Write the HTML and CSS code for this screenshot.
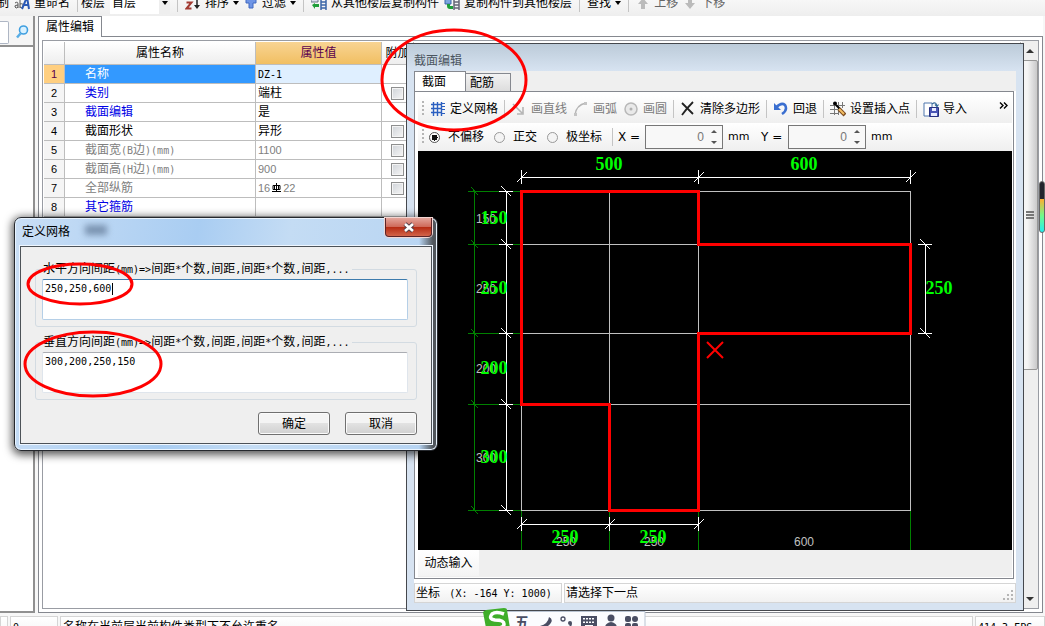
FILE: index.html
```html
<!DOCTYPE html>
<html lang="zh-CN">
<head>
<meta charset="utf-8">
<title>属性编辑</title>
<link rel="stylesheet" href="styles.css">
</head>
<body>
<div class="shell">
  <div class="main-toolbar">
    <button class="tool first">制</button>
    <button class="tool">
      <svg width="16" height="16" viewBox="0 0 16 16"><path d="M1 8q3-2 3 1v4M4 10q-4 0-3 2 1 2 3 0M6 4v9M6 9q4-1 3 2-1 3-3 1" fill="none" stroke="#555"/><path d="M8 14 13 2l2 12M10 10h4" fill="none" stroke="#2b59b5" stroke-width="2"/></svg>
      <span>重命名</span>
    </button>
    <span class="sep"></span>
    <label class="tool-label" for="floor">楼层</label>
    <span class="floor"><select id="floor"><option>首层</option></select><i class="caret"></i></span>
    <span class="sep"></span>
    <button class="tool">
      <svg width="16" height="16" viewBox="0 0 16 16"><path d="M1.500 7.500h5l-5 6h5" fill="none" stroke="#a33b32" stroke-width="2"/><path d="M12 2v9" stroke="#222" stroke-width="1.500"/><path d="M9 10h6l-3 4z" fill="#222"/></svg>
      <span>排序</span><i class="caret"></i>
    </button>
    <button class="tool">
      <svg width="14" height="16" viewBox="0 0 14 16"><path d="M2 3h10v5H9v5H5V8H2z" fill="#6f95e6" stroke="#4068c0"/></svg>
      <span>过滤</span><i class="caret"></i>
    </button>
    <span class="sep"></span>
    <button class="tool">
      <svg width="16" height="16" viewBox="0 0 16 16"><path d="M0 2h7v5H0z" fill="#dde" stroke="#678"/><path d="M10 1v14M15 1v14M10 4h5M10 7h5M10 10h5M10 13h5" stroke="#3b67a8" stroke-width="1.500"/><path d="M1 10l3-2v1h4v3H4v2z" fill="#1f9e3a"/></svg>
      <span>从其他楼层复制构件</span>
    </button>
    <button class="tool">
      <svg width="16" height="16" viewBox="0 0 16 16"><path d="M1 4h6v5H1z" fill="#7ca6df" stroke="#3b67a8"/><path d="M10 1v14M15 1v14M10 4h5M10 7h5M10 10h5M10 13h5" stroke="#667" stroke-width="1.500"/><path d="M3 9h3v2h3v3H6q-3 0-3-3z" fill="#1f9e3a"/></svg>
      <span>复制构件到其他楼层</span>
    </button>
    <span class="sep"></span>
    <button class="tool"><span>查找</span><i class="caret"></i></button>
    <span class="sep"></span>
    <button class="tool" disabled>
      <svg width="14" height="16" viewBox="0 0 14 16"><path d="M7 3l5 6H9v5H5V9H2z" fill="#bbb"/></svg>
      <span>上移</span>
    </button>
    <button class="tool" disabled>
      <svg width="14" height="16" viewBox="0 0 14 16"><path d="M7 14l5-6H9V3H5v5H2z" fill="#bbb"/></svg>
      <span>下移</span>
    </button>
  </div>

  <div class="workspace">
    <aside class="side">
      <div class="search">
        <input class="search-box" type="text" aria-label="搜索">
        <button class="search-go" aria-label="搜索">
          <svg width="14" height="14" viewBox="0 0 14 14"><circle cx="8.500" cy="5" r="4" fill="#d9f1ff" stroke="#3f9fe0" stroke-width="1.600"/><path d="M5.500 8.500 2 12.500" stroke="#59aee6" stroke-width="2.500"/></svg>
        </button>
      </div>
      <div class="side-list"></div>
    </aside>

    <section class="props">
      <div class="props-tabs"><button class="props-tab">属性编辑</button><span class="tab-line"></span></div>
      <div class="props-page">
        <div class="props-frame">
          <div class="table-area">
            <table class="prop-table">
              <colgroup><col class="c-num"><col class="c-name"><col class="c-value"><col class="c-add"><col></colgroup>
              <thead><tr><th></th><th>属性名称</th><th class="hot">属性值</th><th>附加</th><th></th></tr></thead>
              <tbody>
                <tr class="selected"><th>1</th><td>名称</td><td><span class="mono">DZ-1</span></td><td></td><td></td></tr>
                <tr class="link"><th>2</th><td>类别</td><td>端柱</td><td><input type="checkbox" aria-label="类别附加"></td><td></td></tr>
                <tr class="link"><th>3</th><td>截面编辑</td><td>是</td><td></td><td></td></tr>
                <tr><th>4</th><td>截面形状</td><td>异形</td><td><input type="checkbox" aria-label="截面形状附加"></td><td></td></tr>
                <tr class="muted"><th>5</th><td>截面宽<span class="mono">(B</span>边<span class="mono">)(mm)</span></td><td><span class="num">1100</span></td><td><input type="checkbox" aria-label="截面宽附加"></td><td></td></tr>
                <tr class="muted"><th>6</th><td>截面高<span class="mono">(H</span>边<span class="mono">)(mm)</span></td><td><span class="num">900</span></td><td><input type="checkbox" aria-label="截面高附加"></td><td></td></tr>
                <tr class="muted"><th>7</th><td>全部纵筋</td><td><span class="num">16</span><svg class="rebar" width="13" height="10" viewBox="0 0 13 10"><path d="M6.500 0v9M2 8.500h9M4.500 2.500v4M8.500 2.500v4M3 2.500h7v4H3z" fill="none" stroke="#000"/></svg><span class="num">22</span></td><td><input type="checkbox" aria-label="全部纵筋附加"></td><td></td></tr>
                <tr class="link"><th>8</th><td>其它箍筋</td><td></td><td></td><td></td></tr>
              </tbody>
            </table>
          </div>
          <div class="scrollbar">
            <button class="arrow up" aria-label="向上"></button>
            <div class="thumb"><i></i><i></i><i></i></div>
            <div class="track"></div>
            <button class="arrow down" aria-label="向下"></button>
          </div>
        </div>
      </div>
    </section>
  </div>

  <footer class="status">
    <span class="cell edge"></span>
    <span class="cell zero"><span class="mono">0</span></span>
    <span class="cell grow">名称在当前层当前构件类型下不允许重名</span>
    <span class="cell fps"><span class="mono">414.3 FPS</span></span>
  </footer>
</div>

<section class="editor">
  <h1 class="editor-title">截面编辑</h1>
  <div class="editor-body">
    <div class="editor-tabs"><button class="etab active">截面</button><button class="etab">配筋</button></div>
    <div class="editor-page">
      <div class="bar">
        <span class="grip"></span>
        <button class="btn"><svg width="16" height="16" viewBox="0 0 16 16"><path d="M3.500 1v14M7.500 1v14M11.500 1v14M1 3.500h10M1 7.500h10M1 11.500h10" stroke="#2b5fc0" stroke-width="1.400"/><path d="M12 2.500h3M12 5.500h3M12 8.500h3M12 12.500h3" stroke="#2b5fc0"/></svg><span>定义网格</span></button>
        <span class="sep"></span>
        <button class="btn" disabled><svg width="16" height="16" viewBox="0 0 16 16"><path d="M2 3l9 9M12 6v7H6" fill="none" stroke="#b5b5b5" stroke-width="1.600"/></svg><span>画直线</span></button>
        <button class="btn" disabled><svg width="16" height="16" viewBox="0 0 16 16"><path d="M2 14Q3 4 13 2" fill="none" stroke="#b5b5b5" stroke-width="1.500"/><path d="M1 12h3v3H1zM11 1h3v3h-3z" fill="#c4c4c4"/></svg><span>画弧</span></button>
        <button class="btn" disabled><svg width="16" height="16" viewBox="0 0 16 16"><circle cx="8" cy="8" r="6" fill="#e9e9e9" stroke="#b8b8b8" stroke-width="1.500"/><circle cx="8" cy="8" r="1.500" fill="#b0b0b0"/></svg><span>画圆</span></button>
        <span class="sep"></span>
        <button class="btn"><svg width="16" height="16" viewBox="0 0 16 16"><path d="M2 2q5 5 11 11M13 1Q7 7 2 14" fill="none" stroke="#222" stroke-width="1.800"/></svg><span>清除多边形</span></button>
        <span class="sep"></span>
        <button class="btn"><svg width="16" height="16" viewBox="0 0 16 16"><path d="M3.500 6q5-5 8.500-2 3 5-3 9" fill="none" stroke="#3b6fd0" stroke-width="2.500"/><path d="M1 2v7h7z" fill="#3b6fd0"/></svg><span>回退</span></button>
        <span class="sep"></span>
        <button class="btn"><svg width="16" height="16" viewBox="0 0 16 16"><path d="M4.500 1v13M8.500 1v13M12.500 1v6M0 4.500h15M0 8.500h9M0 12.500h9" stroke="#777"/><circle cx="5" cy="2.500" r="2" fill="#000"/><path d="M6 4l4 4" stroke="#000" stroke-width="2"/><path d="M9 8l6 6" stroke="#7b4b20" stroke-width="4"/><path d="M9 8l5 5" stroke="#f4bf62" stroke-width="2"/></svg><span>设置插入点</span></button>
        <span class="sep"></span>
        <button class="btn"><svg width="16" height="16" viewBox="0 0 16 16"><path d="M1 2h8v13H1z" fill="#fff" stroke="#4f76ad"/><path d="M6.500 6.500h9v9h-9z" fill="#4a55b5" stroke="#263080"/><path d="M9 7h4v3H9zM8 12h6v3H8z" fill="#e8ecff"/><path d="M9 3q4-3 5 2M12 3.500l2 2 1.500-2" fill="none" stroke="#356a9a" stroke-width="1.200"/></svg><span>导入</span></button>
        <button class="more" aria-label="更多"><svg width="9" height="7" viewBox="0 0 9 7"><path d="M1 .5l3 3-3 3M5 .5l3 3-3 3" fill="none" stroke="#000" stroke-width="1.400"/></svg></button>
      </div>
      <div class="bar options">
        <span class="grip"></span>
        <label class="radio"><input type="radio" name="offset" checked>不偏移</label>
        <label class="radio"><input type="radio" name="offset">正交</label>
        <label class="radio"><input type="radio" name="offset">极坐标</label>
        <span class="sep"></span>
        <label class="axis" for="dx">X =</label>
        <span class="spin"><input id="dx" type="text" value="0"><span class="steps"><i class="inc"></i><i class="dec"></i></span></span>
        <span class="axis unit">mm</span>
        <label class="axis" for="dy">Y =</label>
        <span class="spin"><input id="dy" type="text" value="0"><span class="steps"><i class="inc"></i><i class="dec"></i></span></span>
        <span class="axis unit">mm</span>
      </div>
      <div class="canvas">
        <svg class="drawing" viewBox="418 151 594 399" preserveAspectRatio="xMinYMin slice">
          <g class="ext">
            <path d="M474.500 191v320M468 191.500h53M468 244.500h53M468 333.500h53M468 404.500h53M468 510.500h53M521.500 511v39M609.500 511v39M698.500 511v39M910.500 511v39"/>
            <path class="tick" d="M471 187l7 8M471 240l7 8M471 329l7 8M471 400l7 8M471 506l7 8"/>
          </g>
          <path class="grid" d="M521.500 191v320M609.500 191v320M698.500 191v320M910.500 191v320M521 191.500h390M521 244.500h390M521 333.500h390M521 404.500h390M521 510.500h390"/>
          <g class="small">
            <text x="486" y="223">150</text><text x="486" y="293">250</text><text x="486" y="373">200</text><text x="486" y="462">300</text>
            <text x="566" y="546">250</text><text x="654" y="546">250</text><text x="804" y="546">600</text>
          </g>
          <g class="dim">
            <path d="M506.500 191v320M499 191.500h14M499 244.500h14M499 333.500h14M499 404.500h14M499 510.500h14"/>
            <path d="M521 177.500h390M521.500 170v14M698.500 170v14M910.500 170v14"/>
            <path d="M521 524.500h178M521.500 517v14M609.500 517v14M698.500 517v14"/>
            <path d="M925.500 244v90M918 244.500h14M918 333.500h14"/>
            <path class="tick" d="M501 186l10 10M501 239l10 10M501 328l10 10M501 399l10 10M501 505l10 10M517 182l10-10M694 182l10-10M906 182l10-10M517 529l10-10M605 529l10-10M694 529l10-10M920 239l10 10M920 328l10 10"/>
          </g>
          <path class="outline" d="M521.500 191.500h177v53h212v89h-212v177h-89v-106h-88z"/>
          <path class="origin" d="M707 342l16 16M723 342l-16 16"/>
          <g class="big">
            <text x="609" y="170">500</text><text x="804" y="170">600</text>
            <text x="494" y="224">150</text><text x="494" y="294">250</text><text x="494" y="374">200</text><text x="494" y="463">300</text>
            <text x="939" y="294">250</text><text x="565" y="543">250</text><text x="653" y="543">250</text>
          </g>
        </svg>
      </div>
      <div class="input-bar"><button class="dyn">动态输入</button></div>
    </div>
    <div class="editor-status">
      <span class="cell pos">坐标&nbsp;<span class="mono"> (X: -164 Y: 1000)</span></span>
      <span class="cell hint">请选择下一点<svg width="12" height="12" viewBox="0 0 12 12"><path d="M8 0h2v2H8zM4 4h2v2H4zM8 4h2v2H8zM0 8h2v2H0zM4 8h2v2H4zM8 8h2v2H8z" fill="#b5b5b5"/></svg></span>
    </div>
  </div>
</section>

<div class="gauge"></div>

<div class="ime">
  <svg width="164" height="20" viewBox="0 0 164 20">
    <path d="M23 3.500h140v18H23z" fill="#fbfcfe" stroke="#b9c4d2"/>
    <path d="M1 4q1-1 3-2L22 0q3 0 3 2l3 18H4z" fill="#3fae2a"/>
    <path d="M22 6Q14 3 10 6q-4 5 3 6 9 0 9 4 0 4-7 4" fill="none" stroke="#fff" stroke-width="3.500"/>
    <g fill="#4a4e63">
      <path d="M67 9q6 3-1 9-4 2-8 0 8-2 9-9z"/>
      <circle cx="81" cy="11" r="2" fill="none" stroke="#4a4e63" stroke-width="1.300"/>
      <circle cx="88" cy="15" r="2"/><path d="M90 15l-1 5-2-1 1-3z"/>
      <path d="M99 8h16v12H99zM101 10v1.500h2V10zm3 0v1.500h2V10zm3 0v1.500h2V10zm3 0v1.500h2V10zm-9 3.500V15h2v-1.500zm3 0V15h2v-1.500zm3 0V15h2v-1.500zm3 0V15h2v-1.500zm-7 3.500v1h8v-1z" fill-rule="evenodd"/>
      <circle cx="129" cy="10" r="3.500"/><path d="M123 20q0-5 6-6 6 1 6 6z"/>
      <rect x="143" y="8" width="6" height="6" rx="2"/><circle cx="153" cy="11" r="3"/><rect x="143" y="15" width="6" height="6" rx="2"/><rect x="150" y="15" width="6" height="6" rx="2"/>
    </g>
    <text class="ime-text" x="33" y="19">五</text>
  </svg>
</div>

<section class="dialog">
  <header class="dialog-head">
    <h2>定义网格</h2>
    <span class="ghost"></span>
    <button class="close" aria-label="关闭"><svg width="14" height="11" viewBox="0 0 14 11"><path d="M3 2l8 7M11 2l-8 7" stroke="#55404a" stroke-width="4.500"/><path d="M3 2l8 7M11 2l-8 7" stroke="#fff" stroke-width="2.600"/></svg></button>
  </header>
  <div class="dialog-body">
    <fieldset class="group">
      <legend><label for="hgap">水平方向间距<span class="mono">(mm)=&gt;</span>间距<span class="mono">*</span>个数<span class="mono">,</span>间距<span class="mono">,</span>间距<span class="mono">*</span>个数<span class="mono">,</span>间距<span class="mono">,...</span></label></legend>
      <div class="field focus"><textarea id="hgap">250,250,600</textarea><i class="cursor"></i></div>
    </fieldset>
    <fieldset class="group">
      <legend><label for="vgap">垂直方向间距<span class="mono">(mm)=&gt;</span>间距<span class="mono">*</span>个数<span class="mono">,</span>间距<span class="mono">,</span>间距<span class="mono">*</span>个数<span class="mono">,</span>间距<span class="mono">,...</span></label></legend>
      <div class="field"><textarea id="vgap">300,200,250,150</textarea></div>
    </fieldset>
    <div class="actions"><button class="push">确定</button><button class="push">取消</button></div>
  </div>
</section>

<svg class="marks" width="530" height="400" viewBox="0 0 530 400">
  <ellipse cx="454" cy="80" rx="72" ry="50"/>
  <ellipse cx="80" cy="284" rx="52" ry="20"/>
  <ellipse cx="93" cy="364" rx="68" ry="32"/>
</svg>
</body>
</html>
```
FILE: styles.css
```css
* { box-sizing: border-box; }
body {
  margin: 0;
  height: 100vh;
  overflow: hidden;
  position: relative;
  background: #fff;
  color: #000;
  font: 12px/16px "Liberation Sans", "Noto Sans CJK SC", sans-serif;
}
button, input, select, textarea { font: inherit; color: inherit; margin: 0; padding: 0; }
button { border: 0; background: none; white-space: nowrap; }
h1, h2 { margin: 0; font: inherit; }
svg { display: block; flex: none; }
.mono { font: 10px/16px "DejaVu Sans Mono", monospace; white-space: pre; }
.num { font-size: 11px; }

/* main window */
.shell { display: flex; flex-direction: column; height: calc(100vh + 26px); margin-top: -10px; }
.main-toolbar {
  display: flex; align-items: center; gap: 5px; flex: none; height: 26px;
  overflow: hidden; background: linear-gradient(#fdfdfd, #eee);
}
.tool { display: flex; align-items: center; gap: 4px; }
.tool:disabled { color: #666; }
.tool.first { margin-left: -3px; }
.tool-label { margin-left: -4px; }
.sep { flex: none; width: 1px; height: 18px; background: #c4c4c4; }
.main-toolbar .sep { margin: 0 2px; }
.caret { flex: none; width: 0; border: 3px solid transparent; border-top: 4px solid #000; border-bottom: 0; }
.floor { display: flex; align-items: center; width: 60px; height: 22px; padding-right: 2px; background: linear-gradient(90deg, #fff 49px, #eee 49px); }
.floor select { appearance: none; flex: 1; padding-left: 2px; border: 0; background: none; }

.workspace { display: flex; flex: 1; min-height: 0; gap: 3px; padding-right: 2px; background: #f7f7f7; }
.side { display: flex; flex-direction: column; flex: none; width: 35px; border: solid #909090; border-width: 0 2px 2px 0; background: #fff; }
.search { display: flex; align-items: center; gap: 5px; height: 31px; padding-top: 3px; border-bottom: 2px solid #909090; background: #f5f5f5; }
.search-box { width: 9px; height: 23px; border: 1px solid #aeb6c4; border-left: 0; border-radius: 0 2px 2px 0; background: #fff; }
.search-go { padding: 1px; }
.side-list { flex: 1; }

.props { display: flex; flex-direction: column; flex: 1; min-width: 0; background: #fff; }
.props-tabs { display: flex; height: 21px; }
.props-tab { width: 64px; border: solid #85888f; border-width: 1px 1px 0; background: #fff; }
.tab-line { flex: 1; border-bottom: 1px solid #85888f; }
.props-page { display: flex; flex: 1; min-height: 0; padding: 3px; border: solid #85888f; border-width: 0 1px 1px; }
.props-frame { display: flex; flex: 1; min-width: 0; border: 1px solid #999ca3; }
.table-area { flex: 1; min-width: 0; padding: 1px; }
.prop-table { width: 100%; table-layout: fixed; border-collapse: separate; border-spacing: 0; }
.c-num { width: 21px; }
.c-name { width: 191px; }
.c-value { width: 126px; }
.c-add { width: 32px; }
.prop-table th, .prop-table td {
  height: 19px; padding: 0; border: solid #bdbdbd; border-width: 0 1px 1px 0;
  font-weight: normal; line-height: 18px; white-space: nowrap;
}
.prop-table thead th { height: 23px; background: linear-gradient(#fff, #eee); }
.prop-table thead .hot { background: linear-gradient(#f8d493, #f1bf62); color: #5a004d; }
.prop-table tbody th { background: #f5f5f5; font-size: 11px; }
.prop-table td:nth-child(2) { padding-left: 20px; }
.prop-table td:nth-child(3) { padding-left: 2px; }
.prop-table td:nth-child(4) { text-align: center; }
.link td:nth-child(2) { color: #0000e6; }
.muted td { color: #808080; }
.prop-table .selected th { background: #ffcf80; color: #5a004d; }
.selected td:nth-child(2) { background: #3399ff; color: #fff; }
.selected td:nth-child(3) { background: #dfefff; }
.rebar { display: inline-block; vertical-align: -1px; }
.prop-table input {
  appearance: none; display: block; width: 13px; height: 13px; margin: 0 auto;
  border: 1px solid #8e8f8f; outline: 1px solid #f4f4f4; outline-offset: -2px;
  background: linear-gradient(135deg, #cfd3d8, #f6f6f6);
}

.scrollbar { display: flex; flex-direction: column; flex: none; width: 16px; background: #efefef; }
.arrow { flex: none; display: flex; align-items: center; justify-content: center; height: 19px; }
.arrow::before { content: ""; border: 4px solid transparent; }
.up::before { border-bottom-color: #333; border-top: 0; }
.down::before { border-top-color: #333; border-bottom: 0; }
.thumb {
  flex: 310; display: flex; flex-direction: column; align-items: center; justify-content: center; gap: 1px;
  border: 1px solid #979797; border-radius: 2px; background: linear-gradient(90deg, #f5f5f5 30%, #c9c9ca);
}
.thumb i { width: 8px; height: 2px; background: #777; }
.track { flex: 220; }

.status, .editor-status { display: flex; flex: none; gap: 2px; }
.status { height: 29px; padding-top: 3px; background: #f7f7f7; }
.cell { border: 1px solid #d5d5d5; background: linear-gradient(#fff, #f1f1f1); white-space: nowrap; }
.status .cell { padding: 2px 2px 0; }
.edge { width: 8px; }
.zero { width: 48px; }
.grow { flex: 1; }
.fps { width: 70px; }

/* section editor window */
.editor {
  position: absolute; left: 406px; top: 43px; right: 21px; bottom: 15px;
  display: flex; flex-direction: column; padding: 0 7px 7px;
  border: 1px solid #45484d; background: linear-gradient(#bccbd9, #d7e3f1 27px);
}
.editor-title { flex: none; height: 27px; padding-top: 9px; color: #4b5560; }
.editor-body { display: flex; flex-direction: column; flex: 1; min-height: 0; background: #fff; }
.editor-tabs { display: flex; align-items: flex-end; flex: none; height: 20px; background: #efefef; }
.etab { width: 45px; height: 18px; border: solid #85888f; border-width: 1px 1px 0 0; background: linear-gradient(#f3f3f3, #ddd); text-align: left; padding-left: 4px; }
.etab.active { width: 52px; height: 20px; padding-left: 7px; border-left-width: 1px; background: #fff; }
.editor-page { display: flex; flex-direction: column; flex: 1; min-height: 0; margin-right: 2px; padding: 3px 1px 1px 3px; border: 1px solid #85888f; }
.bar { display: flex; align-items: center; flex: none; gap: 6px; height: 28px; padding-left: 4px; background: linear-gradient(#fff, #efefef); }
.grip { flex: none; width: 2px; height: 16px; background: repeating-linear-gradient(#b5b5b5 0 2px, transparent 2px 4px); }
.btn { display: flex; align-items: center; gap: 4px; flex: none; }
.btn:disabled { color: #7b7b7b; }
.more { margin: -8px 4px 0 auto; }
.options { gap: 5px; }
.radio { display: flex; align-items: center; gap: 8px; flex: none; margin-right: 5px; }
.radio input {
  appearance: none; width: 11px; height: 11px; border: 1px solid #999; border-radius: 50%;
  background: #f4f4f4;
}
.radio input:checked { border-color: #555; background: radial-gradient(#111 3px, #fff 3px); }
.axis { flex: none; width: 22px; font: 12px/16px "DejaVu Sans", sans-serif; white-space: nowrap; }
.unit { width: 28px; font-size: 11px; }
.spin { display: flex; flex: none; width: 78px; height: 24px; border: 1px solid #777; background: #f8f8f8; }
.spin input { flex: 1; min-width: 0; padding-right: 4px; border: 0; background: none; color: #777; text-align: right; }
.steps { display: flex; flex-direction: column; justify-content: space-between; width: 14px; padding: 4px 3px; }
.steps i { width: 0; border: 3px solid transparent; }
.steps .inc { border-bottom-color: #555; border-top: 0; }
.steps .dec { border-top-color: #555; border-bottom: 0; }

.canvas { flex: 1; min-height: 0; overflow: hidden; background: #000; }
.drawing { width: 100%; height: 100%; }
.drawing path { fill: none; stroke-width: 1; shape-rendering: crispEdges; }
.ext path { stroke: #008000; }
.drawing .grid { stroke: #c0c0c0; }
.dim path { stroke: #fff; }
.drawing .outline { stroke: #f00; stroke-width: 3; }
.drawing .origin { stroke: #f00; stroke-width: 2; shape-rendering: auto; }
.small { fill: #c0c0c0; font: 12px "Liberation Sans", sans-serif; text-anchor: middle; }
.big { fill: #0f0; font: bold 18px "Liberation Serif", serif; text-anchor: middle; }

.input-bar { display: flex; flex: none; height: 27px; background: #efefef; }
.dyn { width: 61px; height: 26px; background: linear-gradient(#fff, #f4f4f4); }
.editor-status { height: 24px; padding-top: 4px; }
.editor-status .cell { line-height: 18px; }
.pos { width: 148px; padding-left: 1px; }
.hint { flex: 1; display: flex; align-items: flex-end; justify-content: space-between; padding-left: 1px; }

.gauge {
  position: absolute; right: 0; top: 181px; width: 6px; height: 52px;
  border: 1px solid #666; border-radius: 3px;
  background: linear-gradient(#23242c 17px, #ffad2f 17px, #6dfb8c 34px, #21eef0);
}
.ime { position: absolute; left: 482px; bottom: -2px; }
.ime-text { font: bold 14px "Noto Sans CJK SC", sans-serif; fill: #4a4e63; }

/* grid dialog */
.dialog {
  position: absolute; left: 14px; top: 217px; width: 424px;
  padding: 0 5px 6px; border: 1px solid #25282d; border-radius: 7px;
  background: linear-gradient(90deg, transparent 404px, #50565c 418px), linear-gradient(100deg, #c9def5, #a9cdf2 40%, #c4dcf4 60%, #b5d3f2);
  box-shadow: inset 0 0 0 1px #e9f4ff, 0 2px 9px 2px rgba(0, 0, 0, .65);
}
.dialog-head { display: flex; align-items: flex-start; height: 28px; }
.dialog-head h2 { padding: 6px 0 0 2px; }
.ghost { width: 22px; height: 10px; margin: 7px 0 0 15px; filter: blur(3px); background: #7a93b0; }
.close {
  display: flex; align-items: center; justify-content: center; width: 47px; height: 19px; margin-left: auto;
  border: 1px solid #5b2428; border-top: 0; border-radius: 0 0 4px 4px;
  background: linear-gradient(#e3a59b, #cf6a5a 48%, #b52a12 50%, #d2644a);
  box-shadow: 0 0 0 1px #f3d6d2;
}
.dialog-body { padding: 14px 14px 8px; border: 1px solid #4c5258; outline: 1px solid #eef6ff; background: #efefef; }
.group { min-width: 0; margin: 0 0 7px; padding: 2px 8px 6px 6px; border: 1px solid #d3dbe2; border-radius: 3px; }
.group legend { height: 16px; padding: 0 3px 0 1px; white-space: nowrap; }
.field { display: flex; position: relative; height: 41px; border: 1px solid #dfe5ec; border-top-color: #abadb3; border-radius: 2px; background: #fff; }
.field.focus { border-color: #b5cfe7; border-top-color: #3d7bad; }
.field textarea { flex: 1; border: 0; resize: none; overflow: hidden; background: none; padding: 1px 2px; font: 10px/16px "DejaVu Sans Mono", monospace; outline: 0; }
.cursor { position: absolute; left: 69px; top: 3px; width: 1px; height: 12px; background: #000; }
.actions { display: flex; justify-content: flex-end; gap: 15px; padding-top: 5px; }
.push { width: 72px; height: 23px; border: 1px solid #707070; border-radius: 3px; background: linear-gradient(#f4f4f4 48%, #e2e2e2 50%, #d0d0d0); box-shadow: inset 0 0 0 1px #fbfbfb; }

.marks { position: absolute; left: 0; top: 0; pointer-events: none; }
.marks ellipse { fill: none; stroke: #f00; stroke-width: 3; }
```
